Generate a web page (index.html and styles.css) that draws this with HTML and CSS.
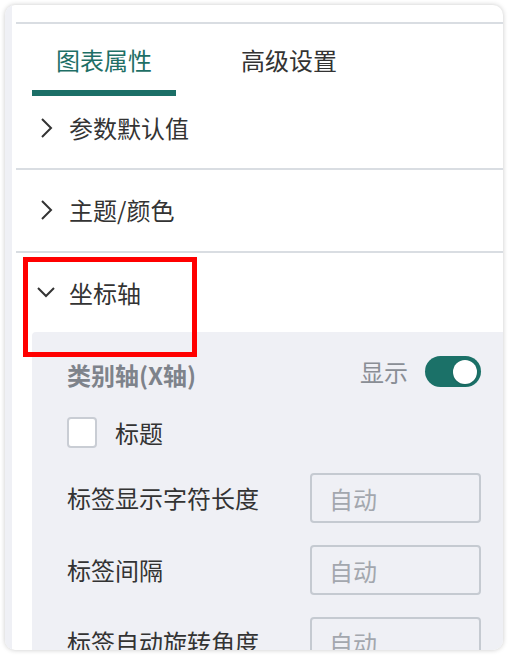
FILE: index.html
```html
<!DOCTYPE html>
<html lang="zh">
<head>
<meta charset="utf-8">
<title>图表属性</title>
<link rel="stylesheet" href="styles.css">
</head>
<body>
<div class="card">
  <div class="strip"></div>
  <div class="main">
    <div class="topbar"></div>
    <div class="tabs">
      <div class="tab active">图表属性</div>
      <div class="tab">高级设置</div>
    </div>
    <div class="section first">
      <svg class="chev" viewBox="0 0 20 20" width="20" height="20"><polyline points="6,1 15,10 6,19" fill="none" stroke="#333" stroke-width="2"/></svg>
      <span>参数默认值</span>
    </div>
    <div class="section">
      <svg class="chev" viewBox="0 0 20 20" width="20" height="20"><polyline points="6,1 15,10 6,19" fill="none" stroke="#333" stroke-width="2"/></svg>
      <span>主题/颜色</span>
    </div>
    <div class="section open">
      <svg class="chev" viewBox="0 0 20 20" width="20" height="20"><polyline points="2,5 10,13 18,5" fill="none" stroke="#333" stroke-width="2"/></svg>
      <span>坐标轴</span>
    </div>
    <div class="panel">
      <div class="panel-head">
        <span class="axis-title">类别轴(X轴)</span>
        <div class="show">
          <span class="show-label">显示</span>
          <span class="toggle"><span class="knob"></span></span>
        </div>
      </div>
      <label class="check-row">
        <span class="checkbox"></span>
        <span>标题</span>
      </label>
      <div class="field">
        <span class="field-label">标签显示字符长度</span>
        <span class="input">自动</span>
      </div>
      <div class="field">
        <span class="field-label">标签间隔</span>
        <span class="input">自动</span>
      </div>
      <div class="field">
        <span class="field-label">标签自动旋转角度</span>
        <span class="input">自动</span>
      </div>
    </div>
  </div>
</div>
<div class="highlight"></div>
</body>
</html>
```

FILE: styles.css
```css
* { box-sizing: border-box; }
html, body { margin: 0; padding: 0; }
body {
  background: #ffffff;
  font-family: "Noto Sans CJK SC", "Noto Sans", sans-serif;
  color: #333333;
  position: relative;
  width: 508px;
  height: 656px;
  overflow: hidden;
}
.card {
  margin: 5px 0 0 5px;
  width: 498px;
  height: 645px;
  border-radius: 10px;
  box-shadow: 0 0 5px rgba(0, 0, 0, 0.22);
  background: #ffffff;
  overflow: hidden;
  display: flex;
}
.strip {
  width: 7px;
  flex: none;
  background: #eff0f5;
}
.main {
  flex: 1;
  padding-left: 4px;
  display: flex;
  flex-direction: column;
}
.topbar {
  height: 19px;
  flex: none;
  border-bottom: 2px solid #d9dde2;
}
.tabs {
  display: flex;
  height: 72px;
  flex: none;
  padding-left: 16px;
}
.tab {
  width: 144px;
  padding-top: 24px;
  font-size: 24px;
  line-height: 24px;
  text-align: center;
  border-bottom: 6px solid transparent;
  color: #333333;
}
.tab + .tab { margin-left: 41px; width: 140px; padding-left: 0; text-align: left; padding-left: 24px; }
.tab.active {
  color: #1e6f66;
  border-bottom-color: #1b6f67;
}
.section {
  display: flex;
  align-items: center;
  padding: 28px 0 29px 20px;
  font-size: 24px;
  line-height: 24px;
  border-bottom: 2px solid #d9dde2;
  flex: none;
}
.section.first { padding-top: 20px; padding-bottom: 28px; }
.section.open { border-bottom: none; padding-bottom: 27px; }
.chev { flex: none; margin-right: 13px; }
.panel {
  margin-left: 16px;
  background: #eff0f5;
  border-top-left-radius: 4px;
  flex: 1;
  padding: 24px 22px 0 35px;
}
.panel-head {
  display: flex;
  align-items: center;
  justify-content: space-between;
  height: 31px;
}
.axis-title {
  font-size: 24px;
  font-weight: 700;
  color: #7e838b;
  line-height: 24px;
  padding-top: 6px;
}
.show { display: flex; align-items: center; }
.show-label { font-size: 24px; color: #8a8e95; margin-right: 17px; line-height: 24px; }
.toggle {
  width: 56px;
  height: 31px;
  border-radius: 16px;
  background: #1b7168;
  display: flex;
  align-items: center;
  justify-content: flex-end;
  padding-right: 4px;
}
.knob {
  width: 24px;
  height: 24px;
  border-radius: 50%;
  background: #ffffff;
  box-shadow: 0 1px 2px rgba(0, 0, 0, 0.15);
}
.check-row {
  display: flex;
  align-items: center;
  margin-top: 30px;
  font-size: 24px;
  line-height: 24px;
  color: #333333;
}
.checkbox {
  width: 30px;
  height: 31px;
  border: 2px solid #c9cdd4;
  border-radius: 4px;
  background: #ffffff;
  margin-right: 18px;
}
.field {
  display: flex;
  align-items: center;
  justify-content: space-between;
  margin-top: 25px;
}
.field + .field { margin-top: 22px; }
.field-label { font-size: 24px; line-height: 24px; color: #333333; }
.input {
  width: 171px;
  height: 50px;
  border: 2px solid #c5cad1;
  border-radius: 4px;
  padding-left: 17px;
  display: flex;
  align-items: center;
  font-size: 24px;
  color: #a3a7ae;
}
.highlight {
  position: absolute;
  left: 23px;
  top: 257px;
  width: 174px;
  height: 100px;
  border: 5px solid #ff0000;
}
```
